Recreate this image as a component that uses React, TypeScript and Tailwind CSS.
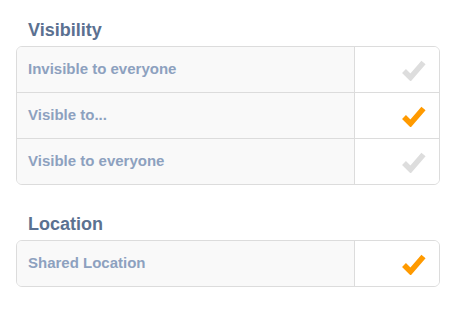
type Row = { label: string; checked: boolean };

const sections: { title: string; rows: Row[] }[] = [
  {
    title: "Visibility",
    rows: [
      { label: "Invisible to everyone", checked: false },
      { label: "Visible to...", checked: true },
      { label: "Visible to everyone", checked: false },
    ],
  },
  {
    title: "Location",
    rows: [{ label: "Shared Location", checked: true }],
  },
];

function Check({ on }: { on: boolean }) {
  return (
    <svg width="25" height="23" viewBox="0 0 25 23">
      <polyline
        points="3,13 9.5,19.5 22.5,4.5"
        fill="none"
        stroke={on ? "#ff9a00" : "#dddddd"}
        strokeWidth="5.5"
        strokeLinecap="butt"
        strokeLinejoin="miter"
      />
    </svg>
  );
}

export default function App() {
  return (
    <div
      className="w-[456px] h-[318px] bg-white px-4"
      style={{ fontFamily: '"Liberation Sans", Helvetica, Arial, sans-serif' }}
    >
      {sections.map((s, i) => (
        <div key={s.title} className={i > 0 ? "mt-[9px]" : ""}>
          <h2 className="pt-[19px] pb-[5px] pl-3 text-[18px] leading-[22px] font-bold text-[#5b7191]">
            {s.title}
          </h2>
          <div className="border border-[#dcdcdc] rounded-[6px] overflow-hidden">
            {s.rows.map((r, j) => (
              <div
                key={r.label}
                className={`flex ${j > 0 ? "h-[46px] border-t border-[#dcdcdc]" : "h-[45px]"}`}
              >
                <div className="flex-1 flex items-center pl-[11px] bg-[#f9f9f9] text-[15px] font-bold text-[#8da1bf]">
                  {r.label}
                </div>
                <div className="w-[85px] flex items-center justify-end pr-[13px] border-l border-[#dcdcdc] bg-white">
                  <Check on={r.checked} />
                </div>
              </div>
            ))}
          </div>
        </div>
      ))}
    </div>
  );
}
